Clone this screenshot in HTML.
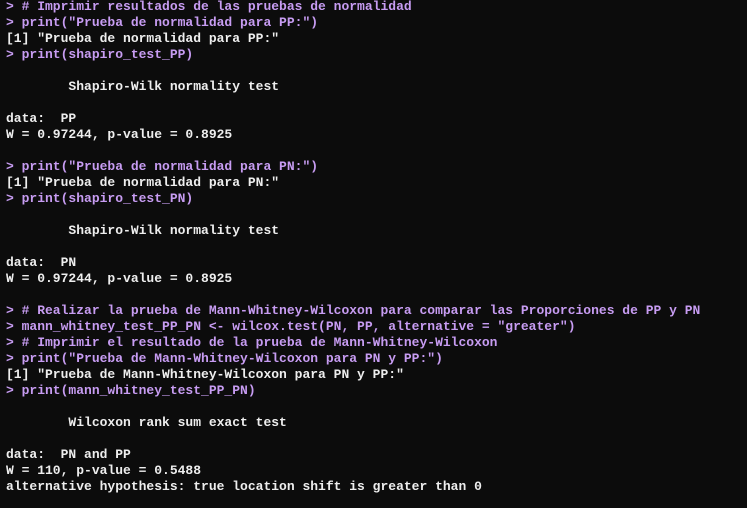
<!DOCTYPE html>
<html><head><meta charset="utf-8"><style>
html,body{margin:0;padding:0;background:#0c0c0c;width:747px;height:508px;overflow:hidden}
pre{margin:0;position:absolute;left:6px;top:-1px;font-family:"Liberation Mono",monospace;font-size:13px;line-height:16px;font-weight:bold;color:#eeeeee}
.p{color:#c79cf2}
</style></head><body><pre><span class="p">&gt; # Imprimir resultados de las pruebas de normalidad
&gt; print("Prueba de normalidad para PP:")</span>
[1] "Prueba de normalidad para PP:"
<span class="p">&gt; print(shapiro_test_PP)</span>

        Shapiro-Wilk normality test

data:  PP
W = 0.97244, p-value = 0.8925

<span class="p">&gt; print("Prueba de normalidad para PN:")</span>
[1] "Prueba de normalidad para PN:"
<span class="p">&gt; print(shapiro_test_PN)</span>

        Shapiro-Wilk normality test

data:  PN
W = 0.97244, p-value = 0.8925

<span class="p">&gt; # Realizar la prueba de Mann-Whitney-Wilcoxon para comparar las Proporciones de PP y PN
&gt; mann_whitney_test_PP_PN &lt;- wilcox.test(PN, PP, alternative = "greater")
&gt; # Imprimir el resultado de la prueba de Mann-Whitney-Wilcoxon
&gt; print("Prueba de Mann-Whitney-Wilcoxon para PN y PP:")</span>
[1] "Prueba de Mann-Whitney-Wilcoxon para PN y PP:"
<span class="p">&gt; print(mann_whitney_test_PP_PN)</span>

        Wilcoxon rank sum exact test

data:  PN and PP
W = 110, p-value = 0.5488
alternative hypothesis: true location shift is greater than 0
</pre></body></html>
